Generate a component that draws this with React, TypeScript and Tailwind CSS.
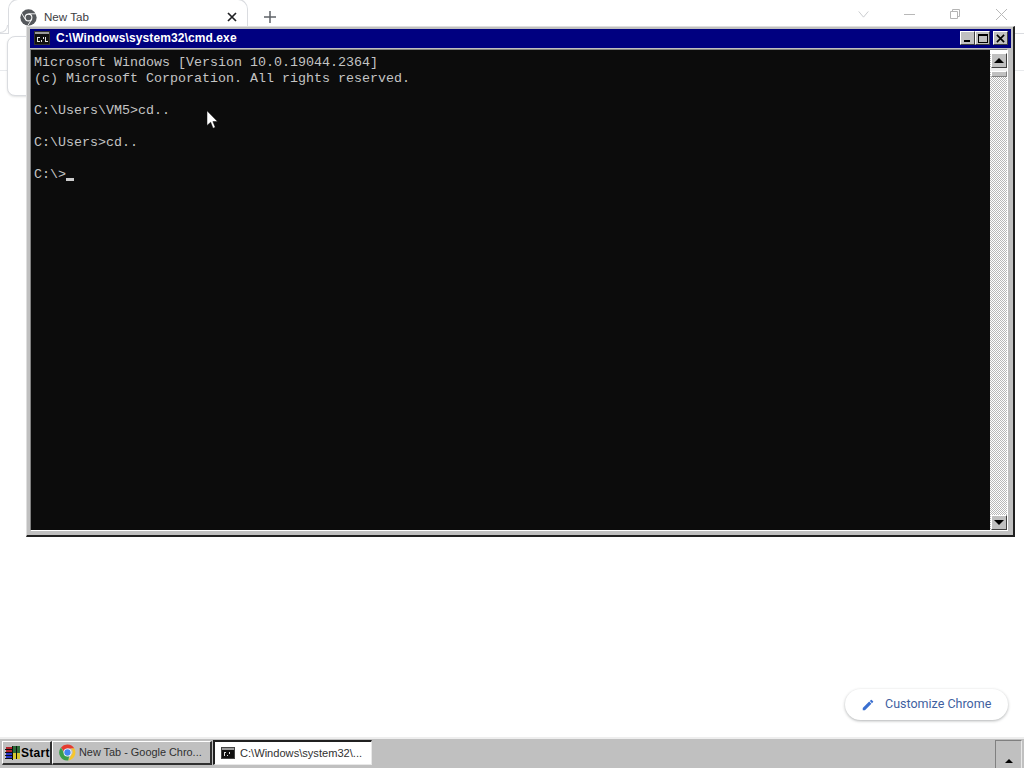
import React from "react";

const ui = { fontFamily: '"Liberation Sans", Arial, sans-serif' };

function CmdIcon({ className }: { className?: string }) {
  return (
    <svg viewBox="0 0 16 14" className={className} shapeRendering="crispEdges">
      <rect x="0" y="0" width="16" height="14" fill="#c0c0c0" />
      <rect x="0.5" y="0.5" width="15" height="13" fill="none" stroke="#303030" />
      <rect x="1" y="1" width="14" height="2" fill="#9a9a9a" />
      <rect x="1" y="3" width="14" height="10" fill="#101010" />
      <rect x="3" y="6" width="3" height="1" fill="#e0e0e0" />
      <rect x="3" y="7" width="1" height="3" fill="#e0e0e0" />
      <rect x="3" y="10" width="3" height="1" fill="#e0e0e0" />
      <rect x="7" y="9" width="1" height="2" fill="#e0e0e0" />
      <rect x="9" y="6" width="1" height="2" fill="#e0e0e0" />
      <rect x="11" y="6" width="1" height="5" fill="#e0e0e0" />
      <rect x="12" y="10" width="2" height="1" fill="#e0e0e0" />
    </svg>
  );
}

function ChromeColor({ className }: { className?: string }) {
  return (
    <svg viewBox="0 0 48 48" className={className}>
      <path d="M24 4a20 20 0 0 1 17.3 10H24a10 10 0 0 0-9.4 6.6L7.6 11.5A20 20 0 0 1 24 4z" fill="#e53c30" />
      <path d="M41.3 14A20 20 0 0 1 26 43.9l8-14a10 10 0 0 0-1.5-15.9z" fill="#f6c62d" />
      <path d="M26 43.9A20 20 0 0 1 7.6 11.5l8.6 15a10 10 0 0 0 11.9 6.6z" fill="#3b9e4a" />
      <circle cx="24" cy="24" r="10" fill="#fff" />
      <circle cx="24" cy="24" r="8" fill="#4286f0" />
    </svg>
  );
}

function ChromeGray({ className }: { className?: string }) {
  return (
    <svg viewBox="0 0 48 48" className={className}>
      <circle cx="24" cy="24" r="23" fill="#55585c" />
      <circle cx="24" cy="24" r="11" fill="#fff" />
      <circle cx="24" cy="24" r="8" fill="#55585c" />
      <path d="M24 13.5H46" stroke="#fff" strokeWidth="2.5" />
      <path d="M15 29.2 4 11" stroke="#fff" strokeWidth="2.5" />
      <path d="M33 29.2 22 47" stroke="#fff" strokeWidth="2.5" />
    </svg>
  );
}

function WinButton({ children, className = "" }: { children: React.ReactNode; className?: string }) {
  return (
    <div
      className={`bg-[#c0c0c0] border border-t-white border-l-white border-r-[#404040] border-b-[#404040] flex items-center justify-center ${className}`}
    >
      {children}
    </div>
  );
}

function CmdWindow() {
  const lines = [
    "Microsoft Windows [Version 10.0.19044.2364]",
    "(c) Microsoft Corporation. All rights reserved.",
    "",
    "C:\\Users\\VM5>cd..",
    "",
    "C:\\Users>cd..",
    "",
  ];
  return (
    <div className="absolute left-[26px] top-[26px] w-[989px] h-[511px] bg-[#c0c0c0] border-t border-l border-t-[#dfdfdf] border-l-[#dfdfdf] border-r-2 border-b-2 border-r-[#202020] border-b-[#202020] pl-[3px] pr-[2px] pt-[2px] pb-[4px] flex flex-col">
      <div className="h-[19px] bg-[#000080] flex items-center pl-[4px] pr-[3px] pb-[1px] shrink-0">
        <CmdIcon className="w-[16px] h-[14px] mr-[6px]" />
        <span className="text-white text-[12px] font-bold flex-1 leading-none tracking-[0.1px]" style={ui}>
          C:\Windows\system32\cmd.exe
        </span>
        <WinButton className="w-[15px] h-[14px]">
          <div className="w-[6px] h-[2px] bg-black mt-[6px] mr-[2px]" />
        </WinButton>
        <WinButton className="w-[15px] h-[14px]">
          <div className="w-[10px] h-[9px] border border-black border-t-2" />
        </WinButton>
        <WinButton className="w-[15px] h-[14px] ml-[3px]">
          <svg viewBox="0 0 10 10" className="w-[9px] h-[9px]">
            <path d="M1 1 9 9M9 1 1 9" stroke="#000" strokeWidth="1.8" />
          </svg>
        </WinButton>
      </div>
      <div className="flex-1 flex mt-[1px] mr-[3px] border border-t-[#808080] border-l-[#808080] border-r-white border-b-white min-h-0">
        <div
          className="flex-1 bg-[#0c0c0c] text-[#c4c4c4] text-[13.33px] leading-[16px] pl-[3px] pt-[5px] whitespace-pre"
          style={{ fontFamily: '"Liberation Mono", monospace' }}
        >
          {lines.map((l, i) => (
            <div key={i} className="h-4">
              {l}
            </div>
          ))}
          <div className="h-4 flex items-start">
            C:\&gt;
            <span className="w-[8px] h-[3px] bg-[#cccccc] mt-[11px]" />
          </div>
        </div>
        <div
          className="w-[17px] flex flex-col"
          style={{
            backgroundColor: "#dcdcdc",
            backgroundImage: "repeating-conic-gradient(#ffffff 0% 25%, #b8b8b8 0% 50%)",
            backgroundSize: "2px 2px",
          }}
        >
          <div className="h-[3px] bg-white shrink-0" />
          <WinButton className="w-[16px] h-[15px] ml-px shrink-0">
            <div className="w-0 h-0 border-l-[5px] border-r-[5px] border-b-[5px] border-l-transparent border-r-transparent border-b-black" />
          </WinButton>
          <div className="h-[3px] bg-[#efefef] shrink-0" />
          <div className="w-[16px] ml-px h-[6px] bg-[#c0c0c0] border border-t-white border-l-white border-r-[#808080] border-b-[#808080] shrink-0" />
          <div className="flex-1" />
          <WinButton className="w-[16px] h-[15px] ml-px shrink-0">
            <div className="w-0 h-0 border-l-[5px] border-r-[5px] border-t-[5px] border-l-transparent border-r-transparent border-t-black" />
          </WinButton>
        </div>
      </div>
    </div>
  );
}

function TabStrip() {
  return (
    <div className="h-[34px] shrink-0 flex items-start relative border-b border-[#dadce0]">
      <div className="ml-[8px] w-[240px] h-[35px] bg-white border border-b-0 border-[#dadce0] rounded-t-[10px] flex items-center pl-[11px] pr-[10px] -mt-[1px] relative">
        <div className="absolute -left-[9px] bottom-[1px] w-[8px] h-[8px] border-b border-r border-[#dadce0] rounded-br-[8px] bg-white" />
        <ChromeGray className="w-[17px] h-[17px] mr-[7px]" />
        <span className="flex-1 text-[11.6px] text-[#3c4043]" style={ui}>
          New Tab
        </span>
        <svg viewBox="0 0 10 10" className="w-[10px] h-[10px]">
          <path d="M1 1 9 9M9 1 1 9" stroke="#202124" strokeWidth="1.7" />
        </svg>
      </div>
      <svg viewBox="0 0 12 12" className="w-[12px] h-[12px] ml-[16px] mt-[11px]">
        <path d="M6 0V12M0 6H12" stroke="#5f6368" strokeWidth="1.5" />
      </svg>
      <div className="flex-1" />
      <svg viewBox="0 0 12 8" className="w-[11px] h-[7px] mt-[11px] mr-[35px]">
        <path d="M.5.5 6 7l5.5-6.5" fill="none" stroke="#c4c6c9" />
      </svg>
      <div className="w-[11px] h-px bg-[#b8b8b8] mt-[14px] mr-[35px]" />
      <svg viewBox="0 0 10 10" className="w-[10px] h-[10px] mt-[9px] mr-[36px]">
        <path d="M.5 2.5h7v7h-7zM2.5 2.5v-2h7v7h-2" fill="none" stroke="#b4b4b4" />
      </svg>
      <svg viewBox="0 0 10 10" className="w-[11px] h-[11px] mt-[9px] mr-[17px]">
        <path d="M0 0 10 10M10 0 0 10" stroke="#b8b8b8" strokeWidth="0.9" />
      </svg>
    </div>
  );
}

function TaskButton({ pressed, children, className = "" }: { pressed?: boolean; children: React.ReactNode; className?: string }) {
  return (
    <div
      className={`flex items-center border ${
        pressed
          ? "h-[25px] -mt-px bg-white border-t-[#202020] border-l-[#202020] border-r-[#e8e8e8] border-b-[#e8e8e8] border-t-2 border-l-2"
          : "h-[24px] bg-[#c0c0c0] border-t-white border-l-white border-r-[#303030] border-b-[#303030] border-r-2 border-b-2"
      } ${className}`}
      style={ui}
    >
      {children}
    </div>
  );
}

function Taskbar() {
  return (
    <div className="h-[31px] shrink-0 bg-[#c0c0c0] border-t-2 border-t-[#eeeeee] flex items-start pl-[2px] pr-[1px] pt-[2px]">
      <TaskButton className="w-[50px]">
        <svg viewBox="0 0 16 16" className="w-[16px] h-[16px] ml-[2px] shrink-0" shapeRendering="crispEdges">
          <rect x="1" y="2" width="6" height="6" fill="#b4242c" />
          <rect x="1" y="8" width="6" height="6" fill="#2a38c8" />
          <rect x="7" y="1" width="8" height="7" fill="#2a6a38" />
          <rect x="7" y="8" width="8" height="6" fill="#d8c830" />
          <path d="M0 4h7M0 7h7M0 10h7M0 13h7" stroke="#101010" />
          <path d="M7 1v14M11 1v13" stroke="#101010" />
        </svg>
        <span className="font-bold text-black text-[12px] tracking-[0.3px]">Start</span>
      </TaskButton>
      <TaskButton className="w-[160px] pl-[5px] mr-px">
        <ChromeColor className="w-[19px] h-[19px] mr-[2px] shrink-0" />
        <span className="text-[#303030] text-[10.9px] whitespace-nowrap">New Tab - Google Chro...</span>
      </TaskButton>
      <TaskButton pressed className="w-[159px] pl-[5px]">
        <CmdIcon className="w-[16px] h-[12px] mr-[4px] shrink-0" />
        <span className="text-[#303030] text-[11.1px] whitespace-nowrap">C:\Windows\system32\...</span>
      </TaskButton>
      <div className="flex-1" />
      <div className="w-[27px] h-[29px] -mt-px border border-[#808080] border-r-[#e8e8e8] border-b-[#e8e8e8] flex items-end justify-center pb-[5px] mr-[1px]">
        <div className="w-0 h-0 border-l-[4px] border-r-[4px] border-b-[4px] border-l-transparent border-r-transparent border-b-black" />
      </div>
    </div>
  );
}

export default function App() {
  return (
    <div className="relative w-[1024px] h-[768px] bg-white overflow-hidden flex flex-col" style={ui}>
      <TabStrip />
      <div className="flex-1 relative px-[7px] pt-[2px] min-h-0 flex flex-col">
        <div className="absolute left-0 right-0 top-[36px] h-px bg-[#e8eaed]" />
        <div className="relative h-[60px] w-[200px] border border-[#dadce0] rounded-[8px] bg-white shadow-[0_1px_2px_rgba(60,64,67,0.15)]" />
        <div className="flex-1" />
        <div className="self-end mr-[9px] mb-[17px] h-[31px] w-[163px] bg-white rounded-full shadow-[0_1px_3px_rgba(60,64,67,0.4)] flex items-center pl-[16px] text-[12.5px] text-[#3f5f9f]" style={{ fontFamily: "Roboto, sans-serif" }}>
          <svg viewBox="0 0 24 24" className="w-[14px] h-[14px] mr-[10px] fill-[#3a6fd0]">
            <path d="M3 17.25V21h3.75L17.8 9.94l-3.75-3.75L3 17.25zM20.7 7.04a1 1 0 0 0 0-1.41l-2.34-2.34a1 1 0 0 0-1.41 0l-1.83 1.83 3.75 3.75 1.83-1.83z" />
          </svg>
          <span>Customize Chrome</span>
        </div>
      </div>
      <Taskbar />
      <CmdWindow />
      <svg viewBox="0 0 12 20" className="absolute left-[207px] top-[110px] w-[11px] h-[20px]">
        <path d="M0 0v16l4-3.6 2.6 6.6 2.4-1-2.6-6.3H11.5z" fill="#fff" stroke="#000" strokeWidth="0.5" />
      </svg>
    </div>
  );
}
